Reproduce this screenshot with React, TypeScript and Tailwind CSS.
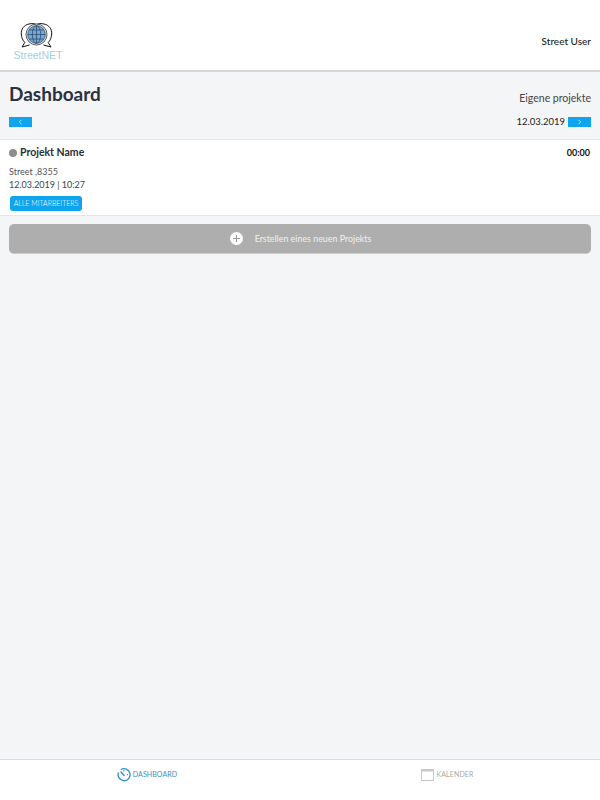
import React from 'react'

const Logo = () => (
  <svg width="33" height="26" viewBox="0 0 33 26" className="block">
    <path d="M9 1C4 2 1 6 1.300 11c.2 3.500 1.500 6.500 3.500 8.500L2 24l7.500-2" fill="none" stroke="#111" strokeWidth="1" />
    <path d="M24 1c5 1 8 5 7.700 10-.2 3.500-1.500 6.500-3.500 8.500L31 24l-7.500-2" fill="none" stroke="#111" strokeWidth="1" />
    <path d="M9 1c3-.7 5.500-.5 7.500.5C18.500.5 21 .3 24 1" fill="none" stroke="#111" strokeWidth="1" />
    <circle cx="16.500" cy="11.500" r="10.500" fill="#dbe6f0" stroke="#333" strokeWidth="0.800" />
    <circle cx="16.500" cy="11.500" r="8.800" fill="#7ba6cd" />
    <g fill="none" stroke="#24466e" strokeWidth="0.700">
      <circle cx="16.500" cy="11.500" r="8.800" />
      <ellipse cx="16.500" cy="11.500" rx="4.200" ry="8.800" />
      <path d="M16.500 2.700v17.600M7.700 11.500h17.600M9.200 7h14.600M9.200 16h14.600" />
    </g>
  </svg>
)

const DashboardIcon = () => (
  <svg width="14" height="14" viewBox="0 0 14 14" fill="none" stroke="#2a8fc9" strokeWidth="1.300">
    <path d="M3.800 1.700A6 6 0 1 1 1.500 4.500" />
    <path d="M3.500 3.500L7.500 7.800M6.500 2.500l.7.900M10 6.500l.9.300" />
  </svg>
)

const CalendarIcon = () => (
  <svg width="13" height="12" viewBox="0 0 13 12" fill="none">
    <rect x="0.500" y="0.500" width="12" height="11" fill="#fff" stroke="#c8c8c8" />
    <rect x="0.500" y="0.500" width="12" height="2" fill="#c8c8c8" />
  </svg>
)

const Chevron = ({ dir }: { dir: 'left' | 'right' }) => (
  <svg width="5" height="6" viewBox="0 0 5 6" fill="none" stroke="#fff" strokeWidth="0.700">
    <path d={dir === 'left' ? 'M3.500 0.800L1.300 3l2.200 2.200' : 'M1.500 0.800L3.700 3 1.500 5.200'} />
  </svg>
)

export default function App() {
  return (
    <div className="flex h-[800px] w-[600px] flex-col overflow-hidden bg-[#f4f5f7] font-['Lato','Noto_Sans',sans-serif] text-[#2b2f38]">
      <header className="flex h-[72px] shrink-0 items-start justify-between border-b-2 border-[#d6d6d6] bg-white pl-[14px] pr-[9px] pt-[23px]">
        <div className="flex w-[48px] flex-col items-center">
          <div className="mr-[3px]">
            <Logo />
          </div>
          <span className="font-['Liberation_Sans',sans-serif] text-[10.500px] leading-[12px] text-[#a5cde3]">StreetNET</span>
        </div>
        <span className="pt-[11px] text-[10px] font-medium leading-[14px] text-[#222]">Street User</span>
      </header>

      <main className="flex-1">
        <div className="flex items-start justify-between px-[9px] pt-[9px]">
          <h1 className="text-[19px] font-bold leading-[26px] text-[#2a3140]">Dashboard</h1>
          <span className="pt-[9px] text-[10.500px] leading-[16px] text-[#444]">Eigene projekte</span>
        </div>
        <div className="mt-[10px] flex items-center justify-between px-[9px]">
          <button className="flex h-[10px] w-[23px] items-center justify-center bg-[#0ea5ee]">
            <Chevron dir="left" />
          </button>
          <div className="flex items-center gap-[3px]">
            <span className="text-[9.500px] leading-[10px] text-[#222]">12.03.2019</span>
            <button className="flex h-[10px] w-[23px] items-center justify-center bg-[#0ea5ee]">
              <Chevron dir="right" />
            </button>
          </div>
        </div>

        <section className="mt-[12px] h-[77px] border-y border-[#e6e7ea] bg-white pl-[9px] pr-[10px] pt-[6px]">
          <div className="flex items-center justify-between">
            <div className="flex items-center gap-[3px]">
              <span className="h-[8px] w-[8px] rounded-full bg-[#8e8e90]" />
              <span className="text-[10.500px] font-bold leading-[13px] text-[#2a2f38]">Projekt Name</span>
            </div>
            <span className="text-[9px] font-bold leading-[13px] text-[#111]">00:00</span>
          </div>
          <p className="mt-[6px] text-[9px] leading-[13px] text-[#555]">Street ,8355</p>
          <p className="text-[9px] leading-[13px] text-[#444]">12.03.2019 | 10:27</p>
          <span className="ml-px mt-[5px] flex h-[15px] w-[72px] items-center justify-center rounded-[3px] bg-[#0ea5ee] text-[7px] font-light text-white">ALLE MITARBEITERS</span>
        </section>

        <button className="mx-[9px] mt-[8px] flex h-[30px] w-[582px] items-center justify-center gap-[12px] rounded-[5px] border-b border-[#c9c9c9] bg-[#aeaeae] pl-[1px] text-[8.900px] text-[#f0f0f0]">
          <span className="relative h-[13px] w-[13px] rounded-full bg-white">
            <span className="absolute left-[3px] top-[6px] h-px w-[7px] bg-[#9a9a9a]" />
            <span className="absolute left-[6px] top-[3px] h-[7px] w-px bg-[#9a9a9a]" />
          </span>
          Erstellen eines neuen Projekts
        </button>
      </main>

      <footer className="grid h-[41px] shrink-0 grid-cols-2 border-t border-[#dcdcdc] bg-white">
        <div className="flex items-center justify-center gap-[2px] pb-[11px] pr-[6px]">
          <DashboardIcon />
          <span className="text-[7px] tracking-[0.100px] text-[#3a8fc2]">DASHBOARD</span>
        </div>
        <div className="flex items-center justify-center gap-[3px] pb-[11px] pr-[6px]">
          <CalendarIcon />
          <span className="text-[7px] tracking-[0.100px] text-[#a8a8a8]">KALENDER</span>
        </div>
      </footer>
    </div>
  )
}
